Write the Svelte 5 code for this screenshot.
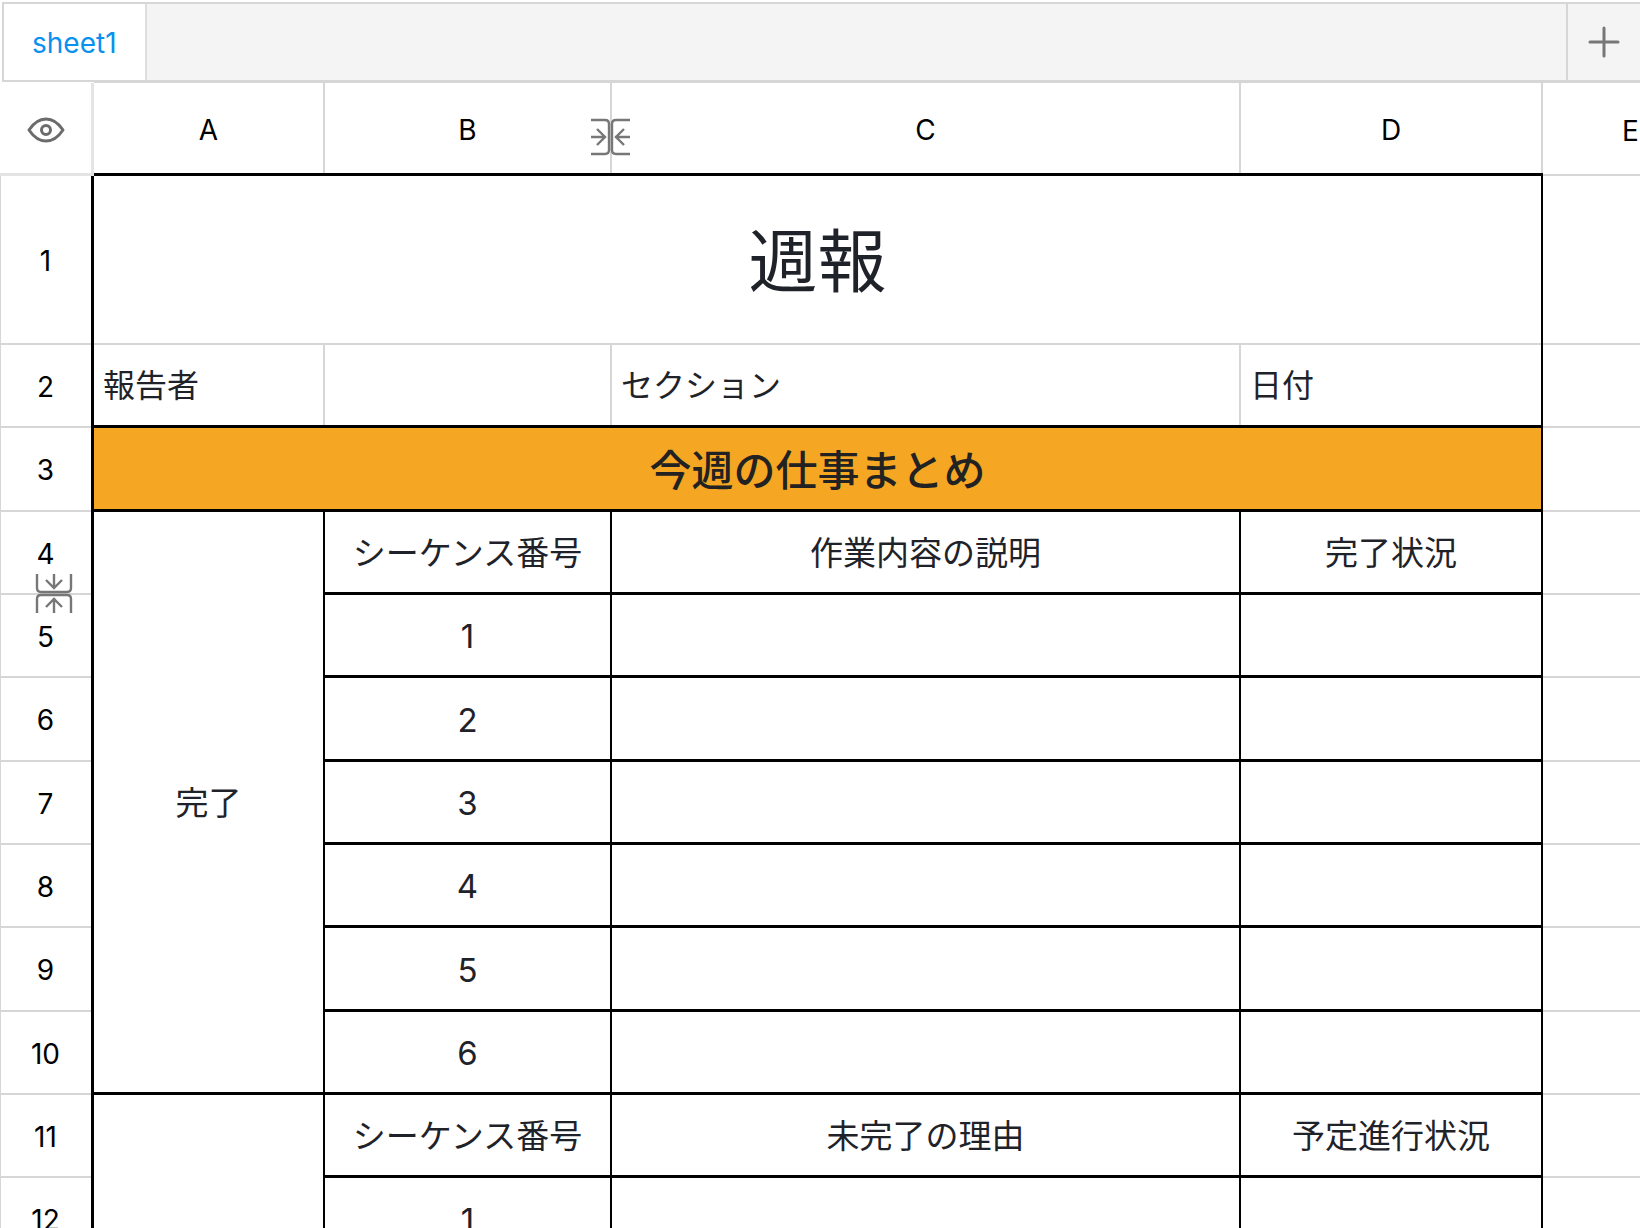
<script lang="ts">
  type Cell = {
    text?: string;
    colspan?: number;
    rowspan?: number;
    kind?: string;
  };

  const columns = ["A", "B", "C", "D"];
  const gaps: Cell[] = [{}, {}];

  const rows: Cell[][] = [
    [{ text: "週報", colspan: 4, kind: "title" }],
    [
      { text: "報告者", kind: "field" },
      { kind: "field" },
      { text: "セクション", kind: "field" },
      { text: "日付", kind: "field last" },
    ],
    [{ text: "今週の仕事まとめ", colspan: 4, kind: "section" }],
    [
      { text: "完了", rowspan: 7 },
      { text: "シーケンス番号" },
      { text: "作業内容の説明" },
      { text: "完了状況" },
    ],
    ...["1", "2", "3", "4", "5", "6"].map((n): Cell[] => [{ text: n }, ...gaps]),
    [
      { rowspan: 2 },
      { text: "シーケンス番号" },
      { text: "未完了の理由" },
      { text: "予定進行状況" },
    ],
    [{ text: "1" }, ...gaps],
  ];
</script>

{#snippet collapseIcon()}
  <svg width="40" height="38" viewBox="0 0 40 38" fill="none" stroke="#777" stroke-width="2.4">
    <path d="M1 2H15Q19 2 19 6V32Q19 36 15 36H1M1 19H15M7 11L15 19L7 27" />
    <path d="M40 2H26Q22 2 22 6V32Q22 36 26 36H40M40 19H25M34 11L26 19L34 27" />
  </svg>
{/snippet}

<div class="workbook">
  <nav class="tabs">
    <button class="tab">sheet1</button>
    <button class="add" aria-label="Add sheet">
      <svg width="32" height="32" viewBox="0 0 32 32" stroke="#777" stroke-width="3" stroke-linecap="round">
        <path d="M16 2V30M2 16H30" />
      </svg>
    </button>
  </nav>

  <div class="grid">
    <table>
      <colgroup>
        <col class="col-index" />
        <col class="col-a" />
        <col class="col-b" />
        <col class="col-c" />
        <col class="col-d" />
        <col class="col-e" />
      </colgroup>
      <thead>
        <tr>
          <th class="corner">
            <button class="eye" aria-label="Show hidden">
              <svg width="38" height="28" viewBox="0 0 38 28" fill="none" stroke="#6b6b6b" stroke-width="3">
                <path d="M2 14C6 8 12 3 19 3S32 8 36 14C32 20 26 25 19 25S6 20 2 14Z" stroke-linejoin="round" />
                <circle cx="19" cy="14" r="4.5" />
              </svg>
            </button>
          </th>
          {#each columns as name}
            <th scope="col">
              {name}
              {#if name === "B"}
                <button class="collapse collapse-col" aria-label="Collapse columns">
                  {@render collapseIcon()}
                </button>
              {/if}
            </th>
          {/each}
          <th scope="col" class="outside">E</th>
        </tr>
      </thead>
      <tbody>
        {#each rows as cells, i}
          <tr class:tall={i === 0}>
            <th scope="row">
              {i + 1}
              {#if i === 3}
                <button class="collapse collapse-row" aria-label="Collapse rows">
                  {@render collapseIcon()}
                </button>
              {/if}
            </th>
            {#each cells as cell}
              <td class={cell.kind} colspan={cell.colspan} rowspan={cell.rowspan}>{cell.text ?? ""}</td>
            {/each}
            <td class="outside"></td>
          </tr>
        {/each}
      </tbody>
    </table>
  </div>
</div>

<style>
  .workbook {
    --line: #d6d6d6;
    background: #fff;
    display: flex;
    flex-direction: column;
    font-family: Inter, "Noto Sans CJK JP", sans-serif;
    height: 100vh;
    overflow: hidden;
  }

  button {
    background: none;
    border: 0;
    cursor: pointer;
    font: inherit;
    padding: 0;
  }

  svg {
    display: block;
  }

  .tabs {
    background: #f4f4f4;
    border: 2px solid var(--line);
    border-right: 0;
    display: flex;
    flex: none;
    height: 76px;
    justify-content: space-between;
    margin: 2px 0 0 2px;
  }

  .tab {
    background: #fff;
    border-right: 2px solid #dedede;
    color: #0a91ee;
    font-size: 28px;
    padding: 2px 28px 0;
  }

  .add {
    align-items: center;
    border-left: 2px solid var(--line);
    display: flex;
    justify-content: center;
    width: 74px;
  }

  .grid {
    flex: 1;
    min-height: 0;
    overflow: hidden;
  }

  table {
    border-collapse: separate;
    border-spacing: 0;
    table-layout: fixed;
    width: 1720px;
  }

  .col-index {
    width: 94px;
  }

  .col-a {
    width: 231px;
  }

  .col-b {
    width: 287px;
  }

  .col-c {
    width: 629px;
  }

  .col-d {
    width: 302px;
  }

  th,
  td {
    border: 0 solid #000;
    border-bottom-width: 3px;
    border-right-width: 2px;
    box-sizing: border-box;
    line-height: 40px;
    padding: 2px 0 0;
    text-align: center;
  }

  th {
    color: #000;
    font-size: 28px;
    font-weight: 400;
    position: relative;
  }

  /* light rules are inset shadows so the black borders keep square ends */
  thead th {
    border-right: 0;
    border-top: 1px solid var(--line);
    box-shadow: inset -2px 0 var(--line);
    height: 94px;
    padding-right: 2px;
    padding-top: 4px;
  }

  thead .corner {
    border-bottom: 0;
    border-top-color: #fff;
    box-shadow: inset -3px -3px #e4e4e4;
    padding-bottom: 4px;
    padding-top: 0;
  }

  tbody th {
    border-bottom: 0;
    border-right-width: 3px;
    box-shadow: inset 1px -2px var(--line);
    padding-top: 0;
  }

  td {
    color: #1f2329;
    font-size: 33px;
  }

  tbody tr {
    height: 83px;
  }

  tbody tr:nth-child(3n) {
    height: 84px;
  }

  tbody tr.tall {
    height: 169px;
  }

  .title {
    border-bottom: 0;
    box-shadow: inset 0 -2px var(--line);
    font-size: 69px;
    line-height: 80px;
  }

  .field {
    border-right: 0;
    box-shadow: inset -2px 0 var(--line);
    font-size: 32px;
    padding-left: 9px;
    text-align: left;
  }

  .last {
    border-right: 2px solid #000;
    box-shadow: none;
  }

  .section {
    background: #f5a623;
    color: #222;
    font-size: 42px;
    font-weight: 500;
    line-height: 60px;
    padding-top: 4px;
  }

  .outside {
    border-bottom: 2px solid var(--line);
    border-right-color: var(--line);
  }

  .eye {
    display: inline-block;
    vertical-align: middle;
  }

  .collapse {
    position: absolute;
    z-index: 1;
  }

  .collapse-col {
    right: -18px;
    top: 35px;
  }

  .collapse-row {
    bottom: -17px;
    left: 34px;
  }

  .collapse-row svg {
    transform: rotate(90deg);
  }
</style>
